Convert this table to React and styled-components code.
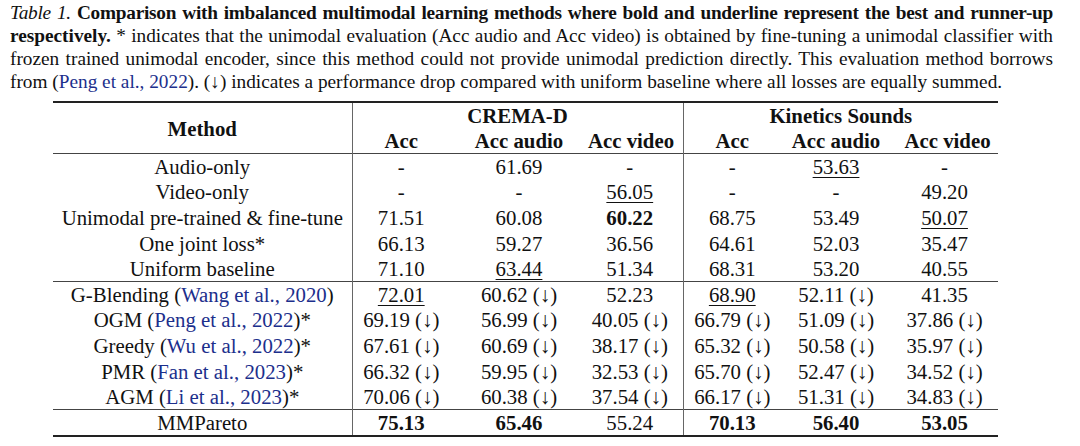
import React from "react";
import styled, { createGlobalStyle } from "styled-components";

const GlobalStyle = createGlobalStyle`
  body {
    margin: 0;
    background: #fff;
  }
`;

const DOWN = "\u2193";

const columns = [
  { w: 299 },
  { w: 98 },
  { w: 138 },
  { w: 95, pr: 11 },
  { w: 98 },
  { w: 110 },
  { w: 107, pl: 6 },
];

const groups = [
  [
    { name: "Audio-only", cells: ["-", "61.69", "-", "-", "_53.63", "-"] },
    { name: "Video-only", cells: ["-", "-", "_56.05", "-", "-", "49.20"] },
    {
      name: "Unimodal pre-trained & fine-tune",
      cells: ["71.51", "60.08", "*60.22", "68.75", "53.49", "_50.07"],
    },
    {
      name: "One joint loss*",
      cells: ["66.13", "59.27", "36.56", "64.61", "52.03", "35.47"],
    },
    {
      name: "Uniform baseline",
      cells: ["71.10", "_63.44", "51.34", "68.31", "53.20", "40.55"],
    },
  ],
  [
    {
      name: "G-Blending",
      cite: "Wang et al., 2020",
      cells: ["_72.01", `60.62 (${DOWN})`, "52.23", "_68.90", `52.11 (${DOWN})`, "41.35"],
    },
    {
      name: "OGM",
      cite: "Peng et al., 2022",
      star: true,
      cells: ["69.19", "56.99", "40.05", "66.79", "51.09", "37.86"].map((v) => `${v} (${DOWN})`),
    },
    {
      name: "Greedy",
      cite: "Wu et al., 2022",
      star: true,
      cells: ["67.61", "60.69", "38.17", "65.32", "50.58", "35.97"].map((v) => `${v} (${DOWN})`),
    },
    {
      name: "PMR",
      cite: "Fan et al., 2023",
      star: true,
      cells: ["66.32", "59.95", "32.53", "65.70", "52.47", "34.52"].map((v) => `${v} (${DOWN})`),
    },
    {
      name: "AGM",
      cite: "Li et al., 2023",
      star: true,
      cells: ["70.06", "60.38", "37.54", "66.17", "51.31", "34.83"].map((v) => `${v} (${DOWN})`),
    },
  ],
  [
    {
      name: "MMPareto",
      cells: ["*75.13", "*65.46", "55.24", "*70.13", "*56.40", "*53.05"],
    },
  ],
];

const App = () => {
  const renderValue = (v) => {
    if (v.startsWith("*")) return <Strong>{v.slice(1)}</Strong>;
    if (v.startsWith("_")) return <Under>{v.slice(1)}</Under>;
    return v;
  };

  return (
    <Page>
      <GlobalStyle />
      <Caption>
        <Line $tight>
          <Italic>Table 1.</Italic>{" "}
          <Strong>
            Comparison with imbalanced multimodal learning methods where bold
            and underline represent the best and runner-up
          </Strong>
        </Line>
        <Line>
          <Strong>respectively.</Strong> * indicates that the unimodal
          evaluation (Acc audio and Acc video) is obtained by fine-tuning a
          unimodal classifier with
        </Line>
        <Line>
          frozen trained unimodal encoder, since this method could not provide
          unimodal prediction directly. This evaluation method borrows
        </Line>
        <Line $last>
          from (<Cite>Peng et al., 2022</Cite>). ({DOWN}) indicates a
          performance drop compared with uniform baseline where all losses are
          equally summed.
        </Line>
      </Caption>

      <Table>
        <colgroup>
          {columns.map((c, i) => (
            <Col key={i} $w={c.w} />
          ))}
        </colgroup>
        <thead>
          <HeadRow>
            <HeadCell rowSpan={2}>Method</HeadCell>
            <HeadCell colSpan={3} $sep>
              CREMA-D
            </HeadCell>
            <HeadCell colSpan={3} $sep>
              Kinetics Sounds
            </HeadCell>
          </HeadRow>
          <HeadRow $rule>
            {["Acc", "Acc audio", "Acc video", "Acc", "Acc audio", "Acc video"].map(
              (h, i) => (
                <HeadCell
                  key={i}
                  $sep={i === 0 || i === 3}
                  $pr={columns[i + 1].pr}
                  $pl={columns[i + 1].pl}
                >
                  {h}
                </HeadCell>
              )
            )}
          </HeadRow>
        </thead>
        {groups.map((rows, g) => (
          <Body key={g} $last={g === groups.length - 1}>
            {rows.map((row, r) => (
              <Row key={r}>
                <Cell>
                  {row.name}
                  {row.cite && (
                    <>
                      {" ("}
                      <Cite>{row.cite}</Cite>)
                    </>
                  )}
                  {row.star && "*"}
                </Cell>
                {row.cells.map((v, i) => (
                  <Cell key={i} $sep={i === 0 || i === 3} $pr={columns[i + 1].pr}>
                    {renderValue(v)}
                  </Cell>
                ))}
              </Row>
            ))}
          </Body>
        ))}
      </Table>
    </Page>
  );
};

export default App;

const Page = styled.div`
  width: 1080px;
  height: 446px;
  overflow: hidden;
  font-family: "Liberation Serif", "Times New Roman", serif;
  color: #111;
`;

const Caption = styled.div`
  width: 1043px;
  padding: 1px 0 0 10px;
  font-size: 19.3px;
  line-height: 23px;
`;

const Line = styled.div`
  white-space: nowrap;
  letter-spacing: ${(p) => (p.$tight ? "-0.25px" : "normal")};
  text-align: justify;
  text-align-last: ${(p) => (p.$last ? "left" : "justify")};
`;

const Italic = styled.em`
  font-style: italic;
`;

const Strong = styled.b`
  font-weight: bold;
`;

const Under = styled.span`
  text-decoration: underline;
  text-decoration-thickness: 1px;
  text-underline-offset: 3px;
`;

const Cite = styled.span`
  color: #1c2f8c;
`;

const Table = styled.table`
  margin: 8px 0 0 53px;
  border-collapse: collapse;
  table-layout: fixed;
  width: 945px;
  font-size: 20.8px;
  border-top: 2px solid #222;
  border-bottom: 2px solid #222;
`;

const Col = styled.col`
  width: ${(p) => p.$w}px;
`;

const HeadRow = styled.tr`
  height: 25.5px;
  border-bottom: ${(p) => (p.$rule ? "1px solid #444" : "none")};
`;

const HeadCell = styled.th`
  padding: 0 ${(p) => p.$pr || 0}px 0 ${(p) => p.$pl || 0}px;
  text-align: center;
  font-weight: bold;
  line-height: 25px;
  white-space: nowrap;
  border-left: ${(p) => (p.$sep ? "1px solid #666" : "none")};
`;

const Body = styled.tbody`
  border-bottom: ${(p) => (p.$last ? "none" : "1px solid #444")};
`;

const Row = styled.tr`
  height: 25.6px;
`;

const Cell = styled.td`
  padding: 0 ${(p) => p.$pr || 0}px 0 0;
  text-align: center;
  line-height: 25px;
  white-space: nowrap;
  border-left: ${(p) => (p.$sep ? "1px solid #666" : "none")};
`;
